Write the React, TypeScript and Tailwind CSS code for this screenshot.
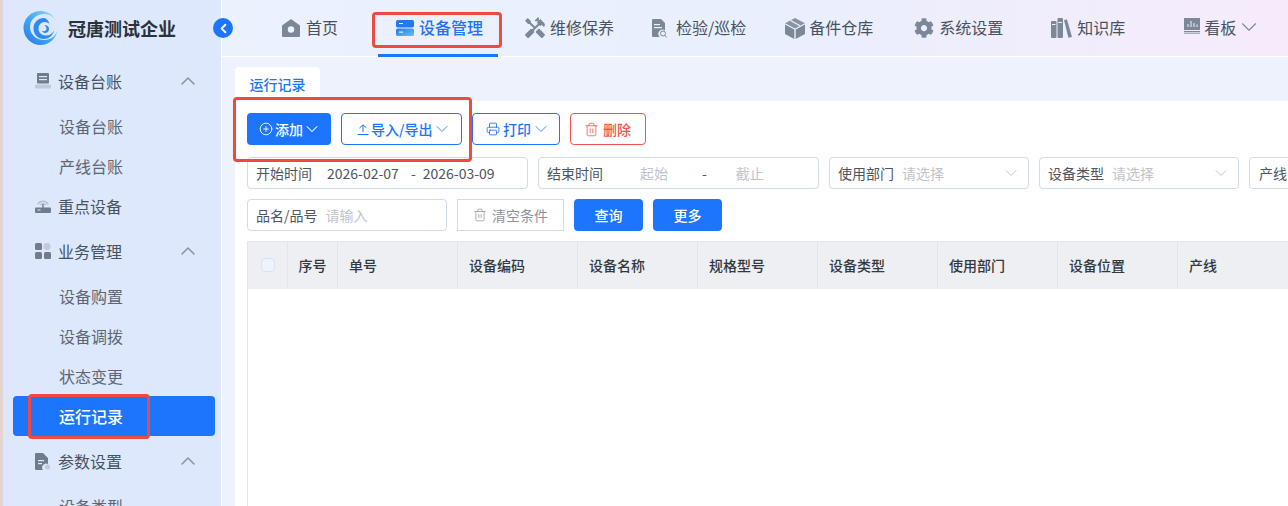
import { ChevronDown, ChevronLeft, ChevronUp, CirclePlus, Printer, Trash2 } from "lucide-react";
import { FaCog } from "react-icons/fa";
import { MdHandyman } from "react-icons/md";

const font = { fontFamily: '"Noto Sans CJK SC", "Noto Sans", sans-serif' };

function Logo() {
  return (
    <svg width="35" height="34" viewBox="0 0 35 34" className="shrink-0">
      <defs>
        <linearGradient id="lg" x1="1" y1="0" x2="0" y2="1">
          <stop offset="0" stopColor="#a4ddf8" />
          <stop offset="0.5" stopColor="#45a8f2" />
          <stop offset="1" stopColor="#1f7bec" />
        </linearGradient>
      </defs>
      <circle cx="17.500" cy="17" r="17" fill="url(#lg)" />
      <ellipse cx="21" cy="16" rx="14" ry="13" fill="#dde8fc" />
      <path
        d="M21 7c-6 0-10.500 4.500-10.500 10.500S15 28 20.500 28c5 0 9.500-3.500 10.500-8.500-1.500 3-4.500 5-8 5-4.500 0-7.500-3-7.500-7s3-6.500 6.500-6.500c2 0 3.500 1 4.500 2C25.500 9.500 23.500 7 21 7z"
        fill="#2c8bef"
      />
      <path
        d="M21.500 14c2.500 0 4.500 1.500 4.500 4s-2 4-4 4c-1.500 0-3-1-3-2.500 1 1 3 1 4-.2 1-1.300.5-3.500-1.500-5.300z"
        fill="#2c8bef"
      />
    </svg>
  );
}

function HomeIcon() {
  return (
    <svg width="18" height="18" viewBox="0 0 18 18" className="shrink-0">
      <path d="M9 0 18 6.500V17a1 1 0 0 1-1 1H1a1 1 0 0 1-1-1V6.500z" fill="#7c8898" />
      <circle cx="9" cy="10.500" r="3.200" fill="#eef3fd" />
    </svg>
  );
}

function DeviceIcon() {
  return (
    <svg width="18" height="16" viewBox="0 0 18 16" className="shrink-0">
      <defs>
        <linearGradient id="dv" x1="0" y1="0" x2="1" y2="1">
          <stop offset="0" stopColor="#2578ee" />
          <stop offset="1" stopColor="#62c3f8" />
        </linearGradient>
      </defs>
      <rect width="18" height="7.400" rx="1.600" fill="#2578ee" />
      <rect y="8.600" width="18" height="7.400" rx="1.600" fill="url(#dv)" />
      <rect x="3" y="3" width="4" height="1" fill="#fff" />
      <rect x="3" y="11.600" width="4" height="1" fill="#fff" />
    </svg>
  );
}

function DocSearchIcon() {
  return (
    <svg width="16" height="19" viewBox="0 0 16 19" className="shrink-0">
      <path d="M1 0h8l4 4v7.500a4 4 0 0 0-5 6.500H1a1 1 0 0 1-1-1V1a1 1 0 0 1 1-1z" fill="#7c8898" />
      <rect x="2" y="5" width="6" height="1.200" fill="#eef3fd" />
      <rect x="2" y="8" width="8" height="1.200" fill="#eef3fd" />
      <circle cx="11" cy="14.500" r="2.500" fill="none" stroke="#7c8898" />
      <path d="m12.800 16.300 2 2.200" stroke="#7c8898" />
    </svg>
  );
}

function BoxIcon() {
  return (
    <svg width="20" height="21" viewBox="0 0 20 21" className="shrink-0">
      <path d="M10 0 20 5.200 10 10.500 0 5.200z" fill="#8a95a4" />
      <path d="M0 6.500 9.300 11.500V21L0 16zM20 6.500 10.700 11.500V21L20 16z" fill="#7c8898" />
      <path d="m5.500 2.500 9.500 5.200" stroke="#eef3fd" strokeWidth="1.200" />
    </svg>
  );
}

function BooksIcon() {
  return (
    <svg width="21" height="20" viewBox="0 0 21 20" className="shrink-0">
      <rect x="0" y="3" width="5.500" height="17" rx="1" fill="#7c8898" />
      <rect x="6.500" y="0" width="5.500" height="20" rx="1" fill="#7c8898" />
      <path d="m13 2 3-.6L21 19l-3.600.8z" fill="#7c8898" />
      <rect x="1" y="6" width="3.500" height="1" fill="#eef3fd" />
      <rect x="7.500" y="4" width="3.500" height="1" fill="#eef3fd" />
    </svg>
  );
}

function BoardIcon() {
  return (
    <svg width="16" height="16" viewBox="0 0 16 16" className="mb-[4px] shrink-0">
      <rect width="16" height="12" fill="#7c8898" />
      <path d="M4 9V6M7 9V3M10 9V5M13 9V6.500" stroke="#eef3fd" strokeWidth="1" />
      <rect y="13" width="16" height="1.300" fill="#7c8898" />
      <rect y="15" width="16" height="1" fill="#a7b0bc" />
    </svg>
  );
}

function UploadIcon() {
  return (
    <svg width="12" height="11" viewBox="0 0 12 11" fill="none" stroke="currentColor" className="shrink-0">
      <path d="M6 8V1M2.500 4 6 .8 9.500 4M.5 10.500h11" />
    </svg>
  );
}

function LedgerIcon() {
  return (
    <svg width="16" height="16" viewBox="0 0 16 16">
      <rect x="2" y="0" width="12" height="10.500" rx="1" fill="#6f7c8e" />
      <rect x="4" y="3" width="8" height="1.200" fill="#dde8fc" />
      <rect x="4" y="6" width="8" height="1.200" fill="#dde8fc" />
      <rect x="0" y="11.500" width="16" height="4" rx="1" fill="#c3cad5" />
    </svg>
  );
}

function RouterIcon() {
  return (
    <svg width="16" height="16" viewBox="0 0 16 16">
      <path d="M2 6a6.800 6.800 0 0 1 12 0l-1.400.8a5.200 5.200 0 0 0-9.200 0z" fill="#b9c1cc" />
      <path d="M4.500 7a4 4 0 0 1 7 0l-1.200.6a2.700 2.700 0 0 0-4.600 0z" fill="#b9c1cc" />
      <rect x="7.200" y="6" width="1.600" height="4" fill="#7c8898" />
      <rect x="0" y="9.500" width="16" height="5.500" rx="1" fill="#6f7c8e" />
      <rect x="2.500" y="11.500" width="3" height="1" fill="#dde8fc" />
    </svg>
  );
}

function GridIcon() {
  return (
    <svg width="16" height="16" viewBox="0 0 16 16">
      <rect x="0" y="0" width="7" height="7" rx="1.500" fill="#6f7c8e" />
      <circle cx="12" cy="3.500" r="3.500" fill="#c3cad5" />
      <rect x="0" y="9" width="7" height="7" rx="1.500" fill="#6f7c8e" />
      <rect x="9" y="9" width="7" height="7" rx="1.500" fill="#6f7c8e" />
    </svg>
  );
}

function ParamIcon() {
  return (
    <svg width="16" height="17" viewBox="0 0 16 17">
      <path d="M1 0h7l5 5v6a4 4 0 0 0-5 6H1a1 1 0 0 1-1-1V1a1 1 0 0 1 1-1z" fill="#6f7c8e" />
      <rect x="3" y="7" width="6" height="1.200" fill="#dde8fc" />
      <rect x="3" y="10" width="4" height="1.200" fill="#dde8fc" />
      <circle cx="12.500" cy="14" r="2.500" fill="#c3cad5" />
    </svg>
  );
}

function GroupRow({ icon, label, open }: { icon: React.ReactNode; label: string; open?: boolean }) {
  return (
    <div className="flex h-10 shrink-0 items-center pl-[35px] pr-[21px] text-base text-[#47525f]">
      <span className="flex w-[16px] justify-center">{icon}</span>
      <span className="ml-[7px]">{label}</span>
      {open && <ChevronUp size={24} strokeWidth={1.5} className="ml-auto text-[#8a929d]" />}
    </div>
  );
}

function SubRow({ label, active }: { label: string; active?: boolean }) {
  return (
    <div
      className={
        active
          ? "ml-[13px] flex h-10 w-[202px] shrink-0 items-center rounded bg-[#1e75fd] pl-[46px] text-base font-medium text-white"
          : "flex h-10 shrink-0 items-center pl-[59px] text-base text-[#5d6672]"
      }
    >
      {label}
    </div>
  );
}

function Sidebar() {
  return (
    <aside className="flex h-full w-[222px] shrink-0 flex-col overflow-hidden border-l-[3px] border-r border-l-[#e3d4cf] border-r-white bg-[#dde8fc]">
      <div className="flex h-[56px] shrink-0 items-center pl-[20px]">
        <Logo />
        <span className="ml-[10px] text-lg font-bold text-[#2c323a]">冠唐测试企业</span>
      </div>
      <div className="mt-[5px] -ml-[3px] flex flex-col">
        <GroupRow icon={<LedgerIcon />} label="设备台账" open />
        <div className="mt-[5px]">
          <SubRow label="设备台账" />
          <SubRow label="产线台账" />
        </div>
        <GroupRow icon={<RouterIcon />} label="重点设备" />
        <div className="mt-[5px]">
          <GroupRow icon={<GridIcon />} label="业务管理" open />
        </div>
        <div className="mt-[5px]">
          <SubRow label="设备购置" />
          <SubRow label="设备调拨" />
          <SubRow label="状态变更" />
          <SubRow label="运行记录" active />
        </div>
        <div className="mt-[5px]">
          <GroupRow icon={<ParamIcon />} label="参数设置" open />
        </div>
        <div className="mt-[5px]">
          <SubRow label="设备类型" />
        </div>
      </div>
    </aside>
  );
}

function NavItem({
  icon,
  label,
  className,
  gap,
  active,
}: {
  icon: React.ReactNode;
  label: string;
  className: string;
  gap: string;
  active?: boolean;
}) {
  return (
    <div
      className={`flex h-full shrink-0 items-center text-base ${className} ${
        active ? "font-medium text-[#1e75fd]" : "text-[#47525f]"
      }`}
    >
      {icon}
      <span className={`${gap} pb-[2px]`}>{label}</span>
    </div>
  );
}

function Header() {
  return (
    <header className="relative flex h-[57px] shrink-0 border-b border-white bg-gradient-to-r from-[#ebf1fd] via-[#e9effd] to-[#f6ebfb]">
      <NavItem className="ml-[60px]" gap="ml-[6px]" icon={<HomeIcon />} label="首页" />
      <div className="relative ml-[40px] flex w-[120px] pl-[18px]">
        <NavItem icon={<DeviceIcon />} gap="ml-[5px]" label="设备管理" className="" active />
        <span className="absolute bottom-[-1px] left-0 h-[3px] w-[120px] bg-[#1e75fd]" />
      </div>
      <NavItem
        className="ml-[25px]"
        gap="ml-[3px]"
        icon={<MdHandyman size={24} color="#7c8898" className="shrink-0" />}
        label="维修保养"
      />
      <NavItem className="ml-[38px]" gap="ml-[8px]" icon={<DocSearchIcon />} label="检验/巡检" />
      <NavItem className="ml-[39px]" gap="ml-[4px]" icon={<BoxIcon />} label="备件仓库" />
      <NavItem
        className="ml-[41px]"
        gap="ml-[5px]"
        icon={<FaCog size={20} color="#7c8898" className="shrink-0" />}
        label="系统设置"
      />
      <NavItem className="ml-[48px]" gap="ml-[5px]" icon={<BooksIcon />} label="知识库" />
      <NavItem className="ml-[59px]" gap="ml-[4px]" icon={<BoardIcon />} label="看板" />
      <ChevronDown size={26} strokeWidth={1} className="self-center mb-[3px] text-[#7c8898]" />
    </header>
  );
}

function Toolbar() {
  const outline = "flex h-8 items-center rounded border text-sm";
  return (
    <div className="flex gap-[10px]">
      <button className="flex h-8 w-[84px] items-center rounded bg-[#1e75fd] pl-3 text-sm font-medium text-white">
        <CirclePlus size={14} strokeWidth={1.5} />
        <span className="ml-[2px]">添加</span>
        <ChevronDown size={20} strokeWidth={1.25} className="-ml-px" />
      </button>
      <button className={`${outline} w-[121px] border-[#1e75fd] pl-[15px] font-medium text-[#1e75fd]`}>
        <UploadIcon />
        <span className="ml-[2px]">导入/导出</span>
        <ChevronDown size={20} strokeWidth={1} />
      </button>
      <button className={`${outline} w-[88px] border-[#1e75fd] pl-[13px] font-medium text-[#1e75fd]`}>
        <Printer size={14} strokeWidth={1.5} />
        <span className="ml-[3px]">打印</span>
        <ChevronDown size={20} strokeWidth={1} />
      </button>
      <button className={`${outline} w-[76px] border-[#f4524d] pl-[13px] font-medium text-[#f4524d]`}>
        <Trash2 size={15} strokeWidth={1.25} />
        <span className="ml-[4px]">删除</span>
      </button>
    </div>
  );
}

function Field({ className, children }: { className: string; children: React.ReactNode }) {
  return (
    <div
      className={`flex h-8 shrink-0 items-center rounded-sm border border-[#d3dae8] pl-2 text-sm text-[#4d5560] ${className}`}
    >
      {children}
    </div>
  );
}

function SelectField({ label }: { label: string }) {
  return (
    <Field className="w-[200px]">
      <span>{label}</span>
      <span className="ml-[8px] text-[#bfc4cc]">请选择</span>
      <ChevronDown size={20} strokeWidth={1} className="ml-auto mr-[7px] text-[#b5bac2]" />
    </Field>
  );
}

function Filters() {
  return (
    <>
      <div className="mt-3 flex gap-[10px]">
        <Field className="w-[281px]">
          <span>开始时间</span>
          <span className="ml-[15px]">2026-02-07</span>
          <span className="ml-3">-</span>
          <span className="ml-[7px]">2026-03-09</span>
        </Field>
        <Field className="w-[281px]">
          <span>结束时间</span>
          <span className="ml-[37px] text-[#bfc4cc]">起始</span>
          <span className="ml-[34px]">-</span>
          <span className="ml-[29px] text-[#bfc4cc]">截止</span>
        </Field>
        <SelectField label="使用部门" />
        <SelectField label="设备类型" />
        <Field className="w-[200px]">
          <span className="ml-px">产线</span>
        </Field>
      </div>
      <div className="mt-[10px] flex gap-[10px]">
        <Field className="w-[200px]">
          <span>品名/品号</span>
          <span className="ml-[8px] text-[#bfc4cc]">请输入</span>
        </Field>
        <button className="flex h-8 w-[107px] items-center justify-center border border-[#d3dae8] text-sm text-[#8c939d]">
          <Trash2 size={14} strokeWidth={1.25} />
          <span className="ml-[5px]">清空条件</span>
        </button>
        <button className="h-8 w-[69px] rounded-sm bg-[#1e75fd] text-sm font-medium text-white">查询</button>
        <button className="h-8 w-[69px] rounded-sm bg-[#1e75fd] text-sm font-medium text-white">更多</button>
      </div>
    </>
  );
}

const columns = ["单号", "设备编码", "设备名称", "规格型号", "设备类型", "使用部门", "设备位置", "产线"];

function Table() {
  return (
    <div className="mt-[10px] flex min-h-0 flex-1 flex-col border-l border-[#e4e6eb]">
      <div className="flex h-[48px] shrink-0 border-t border-[#e4e6eb] bg-[#eeeff2] pb-px text-sm font-medium text-[#33383f]">
        <div className="flex w-[40px] shrink-0 items-center justify-center border-r border-[#e2e5ec]">
          <span className="h-[14px] w-[14px] rounded-sm border border-[#dbe1ec] bg-[#eef2fb]" />
        </div>
        <div className="flex w-[50px] shrink-0 items-center justify-center border-r border-[#e2e5ec]">序号</div>
        {columns.map((col) => (
          <div key={col} className="flex w-[120px] shrink-0 items-center border-r border-[#e2e5ec] pl-[11px]">
            {col}
          </div>
        ))}
      </div>
      <div className="flex-1 bg-white" />
    </div>
  );
}

export default function App() {
  return (
    <div className="relative flex h-[506px] w-[1288px] overflow-hidden bg-[#eef2fd]" style={font}>
      <Sidebar />
      <main className="flex min-w-0 flex-1 flex-col">
        <Header />
        <div className="flex min-h-0 flex-1 flex-col pl-[13px] pt-[10px]">
          <div className="flex h-[34px] w-[85px] shrink-0 items-center justify-center rounded-t bg-white text-sm font-medium text-[#1e75fd]">
            运行记录
          </div>
          <div className="flex min-h-0 flex-1 flex-col bg-white pl-3 pt-3">
            <Toolbar />
            <Filters />
            <Table />
          </div>
        </div>
      </main>

      {/* collapse button and the red marks drawn over the screenshot */}
      <span className="absolute left-[213px] top-[18px] flex h-5 w-5 items-center justify-center rounded-full bg-[#1e75fd] text-white">
        <ChevronLeft size={15} strokeWidth={3} />
      </span>
      <span className="absolute left-[372px] top-[12px] h-[36px] w-[130px] rounded-sm border-[3px] border-[#ef4a3f]" />
      <span className="absolute left-[233px] top-[97px] h-[65px] w-[239px] rounded-sm border-[3px] border-[#ef4a3f]" />
      <span className="absolute left-[28px] top-[394px] h-[45px] w-[122px] rounded-sm border-[3px] border-[#ef4a3f]" />
    </div>
  );
}
